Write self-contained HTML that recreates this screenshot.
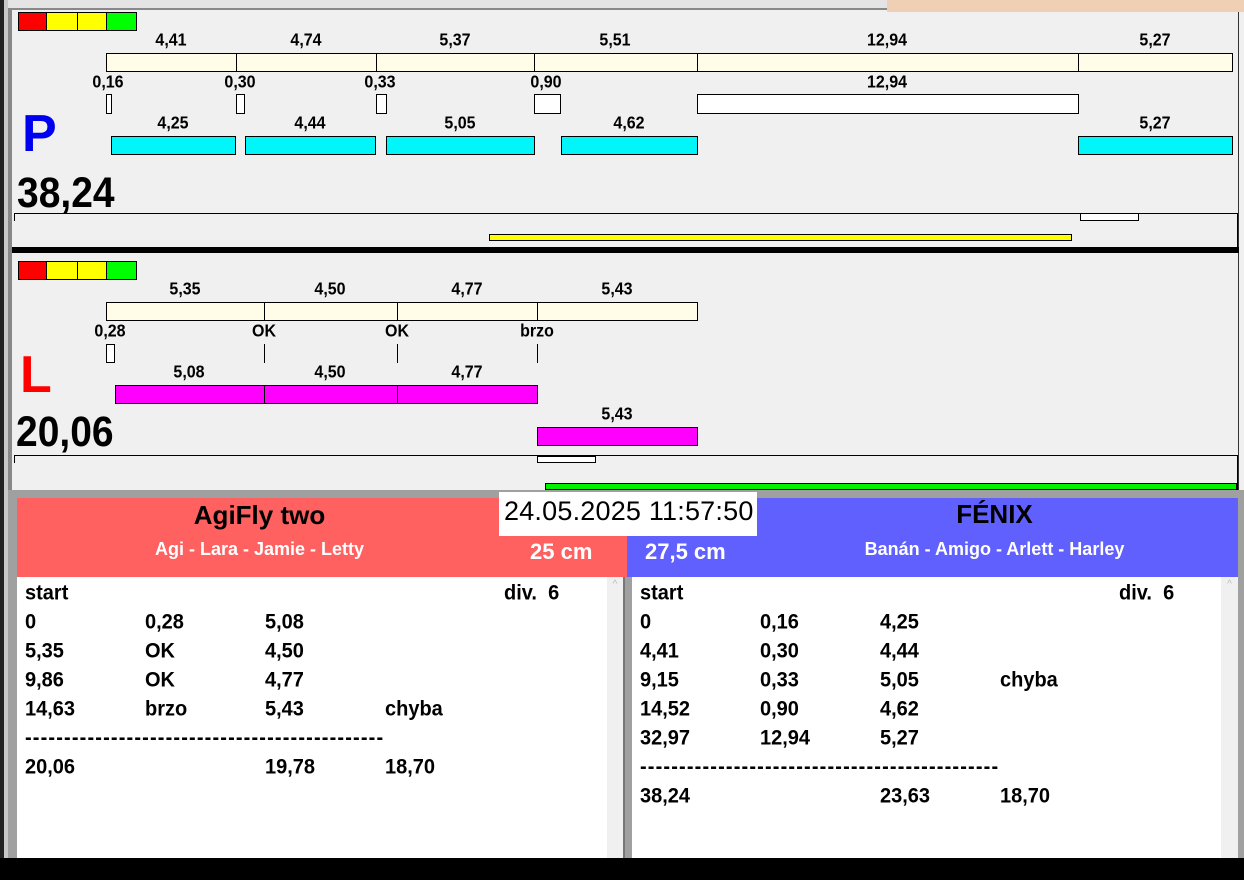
<!DOCTYPE html>
<html><head><meta charset="utf-8"><style>
*{margin:0;padding:0;box-sizing:border-box}
body{width:1244px;height:880px;position:relative;overflow:hidden;background:#f0f0f0;font-family:"Liberation Sans",Arial,sans-serif}
div{position:absolute}
.b{border:1px solid #000}
.cr{background:#fffde8}
.cy{background:#00f6f8}
.mg{background:#ff00ff}
.w{background:#fff}
.lb{font-weight:bold;font-size:16px;transform:translateX(-50%) scaleY(1.1);white-space:nowrap;line-height:18px}
.t{font-weight:bold;font-size:20px;line-height:29px;white-space:nowrap;transform:scaleY(1.08);transform-origin:0 50%}
.tk{width:1px;background:#000}
</style></head><body>
<!-- top strip -->
<div style="left:0;top:0;width:887px;height:10px;background:#e4e4e4;border-bottom:2px solid #888"></div>
<div style="left:887px;top:0;width:357px;height:12px;background:#f0d0b4"></div>
<div style="left:0;top:0;width:4px;height:880px;background:#222"></div>
<div style="left:4px;top:0;width:4px;height:880px;background:#c8c8c8"></div>
<div style="left:8px;top:10px;width:4px;height:480px;background:#888"></div>
<div style="left:1238px;top:12px;width:6px;height:480px;background:#f0f0f0;border-left:1px solid #333"></div>

<!-- P panel -->
<div class="b" style="left:18px;top:12px;width:29px;height:19px;background:#f00"></div>
<div class="b" style="left:46px;top:12px;width:32px;height:19px;background:#ff0"></div>
<div class="b" style="left:77px;top:12px;width:30px;height:19px;background:#ff0"></div>
<div class="b" style="left:106px;top:12px;width:31px;height:19px;background:#0f0"></div>

<div class="lb" style="left:171px;top:32px">4,41</div>
<div class="lb" style="left:306px;top:32px">4,74</div>
<div class="lb" style="left:455px;top:32px">5,37</div>
<div class="lb" style="left:615px;top:32px">5,51</div>
<div class="lb" style="left:887px;top:32px">12,94</div>
<div class="lb" style="left:1155px;top:32px">5,27</div>
<div class="b cr" style="left:106px;top:53px;width:131px;height:19px"></div>
<div class="b cr" style="left:236px;top:53px;width:141px;height:19px"></div>
<div class="b cr" style="left:376px;top:53px;width:159px;height:19px"></div>
<div class="b cr" style="left:534px;top:53px;width:164px;height:19px"></div>
<div class="b cr" style="left:697px;top:53px;width:382px;height:19px"></div>
<div class="b cr" style="left:1078px;top:53px;width:155px;height:19px"></div>

<div class="lb" style="left:108px;top:74px">0,16</div>
<div class="lb" style="left:240px;top:74px">0,30</div>
<div class="lb" style="left:380px;top:74px">0,33</div>
<div class="lb" style="left:546px;top:74px">0,90</div>
<div class="lb" style="left:887px;top:74px">12,94</div>
<div class="b w" style="left:106px;top:94px;width:6px;height:20px"></div>
<div class="b w" style="left:236px;top:94px;width:9px;height:20px"></div>
<div class="b w" style="left:376px;top:94px;width:11px;height:20px"></div>
<div class="b w" style="left:534px;top:94px;width:27px;height:20px"></div>
<div class="b w" style="left:697px;top:94px;width:382px;height:20px"></div>

<div style="left:22px;top:104px;font-size:52px;font-weight:bold;color:#0000f0;line-height:60px">P</div>
<div class="lb" style="left:173px;top:115px">4,25</div>
<div class="lb" style="left:310px;top:115px">4,44</div>
<div class="lb" style="left:460px;top:115px">5,05</div>
<div class="lb" style="left:629px;top:115px">4,62</div>
<div class="lb" style="left:1155px;top:115px">5,27</div>
<div class="b cy" style="left:111px;top:136px;width:125px;height:19px"></div>
<div class="b cy" style="left:245px;top:136px;width:131px;height:19px"></div>
<div class="b cy" style="left:386px;top:136px;width:149px;height:19px"></div>
<div class="b cy" style="left:561px;top:136px;width:137px;height:19px"></div>
<div class="b cy" style="left:1078px;top:136px;width:155px;height:19px"></div>

<div style="left:17px;top:174px;font-size:39px;font-weight:bold;line-height:44px;transform:scaleY(1.1);transform-origin:0 100%">38,24</div>
<div style="left:14px;top:213px;width:1224px;height:35px;border-top:1px solid #000;border-right:1px solid #000"></div>
<div style="left:14px;top:213px;width:1px;height:8px;background:#000"></div>
<div class="b w" style="left:1080px;top:213px;width:59px;height:8px"></div>
<div class="b" style="left:489px;top:234px;width:583px;height:7px;background:#ff0"></div>
<div style="left:12px;top:247px;width:1227px;height:6px;background:#000"></div>

<!-- L panel -->
<div class="b" style="left:18px;top:261px;width:29px;height:19px;background:#f00"></div>
<div class="b" style="left:46px;top:261px;width:32px;height:19px;background:#ff0"></div>
<div class="b" style="left:77px;top:261px;width:30px;height:19px;background:#ff0"></div>
<div class="b" style="left:106px;top:261px;width:31px;height:19px;background:#0f0"></div>

<div class="lb" style="left:185px;top:281px">5,35</div>
<div class="lb" style="left:330px;top:281px">4,50</div>
<div class="lb" style="left:467px;top:281px">4,77</div>
<div class="lb" style="left:617px;top:281px">5,43</div>
<div class="b cr" style="left:106px;top:302px;width:159px;height:19px"></div>
<div class="b cr" style="left:264px;top:302px;width:134px;height:19px"></div>
<div class="b cr" style="left:397px;top:302px;width:141px;height:19px"></div>
<div class="b cr" style="left:537px;top:302px;width:161px;height:19px"></div>

<div class="lb" style="left:110px;top:323px">0,28</div>
<div class="lb" style="left:264px;top:323px">OK</div>
<div class="lb" style="left:397px;top:323px">OK</div>
<div class="lb" style="left:537px;top:323px">brzo</div>
<div class="b w" style="left:106px;top:344px;width:9px;height:19px"></div>
<div class="tk" style="left:264px;top:344px;height:19px"></div>
<div class="tk" style="left:397px;top:344px;height:19px"></div>
<div class="tk" style="left:537px;top:344px;height:19px"></div>

<div style="left:20px;top:345px;font-size:52px;font-weight:bold;color:#f00;line-height:60px">L</div>
<div class="lb" style="left:189px;top:364px">5,08</div>
<div class="lb" style="left:330px;top:364px">4,50</div>
<div class="lb" style="left:467px;top:364px">4,77</div>
<div class="b mg" style="left:115px;top:385px;width:150px;height:19px"></div>
<div class="b mg" style="left:264px;top:385px;width:134px;height:19px"></div>
<div class="b mg" style="left:397px;top:385px;width:141px;height:19px"></div>
<div class="lb" style="left:617px;top:406px">5,43</div>
<div class="b mg" style="left:537px;top:427px;width:161px;height:19px"></div>
<div style="left:16px;top:413px;font-size:39px;font-weight:bold;line-height:44px;transform:scaleY(1.1);transform-origin:0 100%">20,06</div>
<div style="left:14px;top:455px;width:1224px;height:36px;border-top:1px solid #000;border-right:1px solid #000"></div>
<div style="left:14px;top:455px;width:1px;height:8px;background:#000"></div>
<div class="b w" style="left:537px;top:456px;width:59px;height:7px"></div>
<div class="b" style="left:545px;top:483px;width:692px;height:7px;background:#00f000"></div>

<!-- bottom -->
<div style="left:8px;top:490px;width:1236px;height:8px;background:#a0a0a0"></div>
<div style="left:8px;top:498px;width:9px;height:362px;background:#a0a0a0"></div>
<div style="left:17px;top:498px;width:610px;height:79px;background:#ff6060"></div>
<div style="left:627px;top:498px;width:611px;height:79px;background:#6060ff"></div>
<div style="left:1238px;top:498px;width:6px;height:362px;background:#a0a0a0"></div>
<div style="left:17px;top:500px;width:485px;text-align:center;font-size:26px;font-weight:bold;line-height:30px">AgiFly two</div>
<div style="left:17px;top:538px;width:485px;text-align:center;font-size:18px;font-weight:bold;color:#fff;line-height:22px">Agi - Lara - Jamie - Letty</div>
<div style="left:499px;top:492px;width:258px;height:44px;background:#fff;font-size:27px;line-height:38px;padding-left:5px;white-space:nowrap;letter-spacing:0.2px">24.05.2025 11:57:50</div>
<div style="left:530px;top:539px;font-size:22px;font-weight:bold;color:#fff;line-height:26px">25 cm</div>
<div style="left:645px;top:539px;font-size:22px;font-weight:bold;color:#fff;line-height:26px">27,5 cm</div>
<div style="left:757px;top:499px;width:475px;text-align:center;font-size:26px;font-weight:bold;line-height:30px">FÉNIX</div>
<div style="left:757px;top:538px;width:475px;text-align:center;font-size:18px;font-weight:bold;color:#fff;line-height:22px">Banán - Amigo - Arlett - Harley</div>

<div style="left:17px;top:577px;width:590px;height:283px;background:#fff"></div>
<div style="left:607px;top:577px;width:16px;height:283px;background:#f0f0f0;color:#bbb;font-size:10px;text-align:center;line-height:16px">^</div>
<div style="left:623px;top:577px;width:9px;height:283px;background:#a0a0a0;border-left:2px solid #777"></div>
<div style="left:632px;top:577px;width:589px;height:283px;background:#fff"></div>
<div style="left:1221px;top:577px;width:17px;height:283px;background:#f0f0f0;color:#bbb;font-size:10px;text-align:center;line-height:16px">^</div>

<div class="t" style="left:25px;top:579px">start</div><div class="t" style="left:504px;top:579px">div.&nbsp; 6</div>
<div class="t" style="left:25px;top:608px">0</div><div class="t" style="left:145px;top:608px">0,28</div><div class="t" style="left:265px;top:608px">5,08</div>
<div class="t" style="left:25px;top:637px">5,35</div><div class="t" style="left:145px;top:637px">OK</div><div class="t" style="left:265px;top:637px">4,50</div>
<div class="t" style="left:25px;top:666px">9,86</div><div class="t" style="left:145px;top:666px">OK</div><div class="t" style="left:265px;top:666px">4,77</div>
<div class="t" style="left:25px;top:695px">14,63</div><div class="t" style="left:145px;top:695px">brzo</div><div class="t" style="left:265px;top:695px">5,43</div><div class="t" style="left:385px;top:695px">chyba</div>
<div class="t" style="left:25px;top:724px;letter-spacing:1.15px">----------------------------------------------</div>
<div class="t" style="left:25px;top:753px">20,06</div><div class="t" style="left:265px;top:753px">19,78</div><div class="t" style="left:385px;top:753px">18,70</div>

<div class="t" style="left:640px;top:579px">start</div><div class="t" style="left:1119px;top:579px">div.&nbsp; 6</div>
<div class="t" style="left:640px;top:608px">0</div><div class="t" style="left:760px;top:608px">0,16</div><div class="t" style="left:880px;top:608px">4,25</div>
<div class="t" style="left:640px;top:637px">4,41</div><div class="t" style="left:760px;top:637px">0,30</div><div class="t" style="left:880px;top:637px">4,44</div>
<div class="t" style="left:640px;top:666px">9,15</div><div class="t" style="left:760px;top:666px">0,33</div><div class="t" style="left:880px;top:666px">5,05</div><div class="t" style="left:1000px;top:666px">chyba</div>
<div class="t" style="left:640px;top:695px">14,52</div><div class="t" style="left:760px;top:695px">0,90</div><div class="t" style="left:880px;top:695px">4,62</div>
<div class="t" style="left:640px;top:724px">32,97</div><div class="t" style="left:760px;top:724px">12,94</div><div class="t" style="left:880px;top:724px">5,27</div>
<div class="t" style="left:640px;top:753px;letter-spacing:1.15px">----------------------------------------------</div>
<div class="t" style="left:640px;top:782px">38,24</div><div class="t" style="left:880px;top:782px">23,63</div><div class="t" style="left:1000px;top:782px">18,70</div>

<div style="left:0;top:858px;width:1244px;height:22px;background:#000"></div>
</body></html>
